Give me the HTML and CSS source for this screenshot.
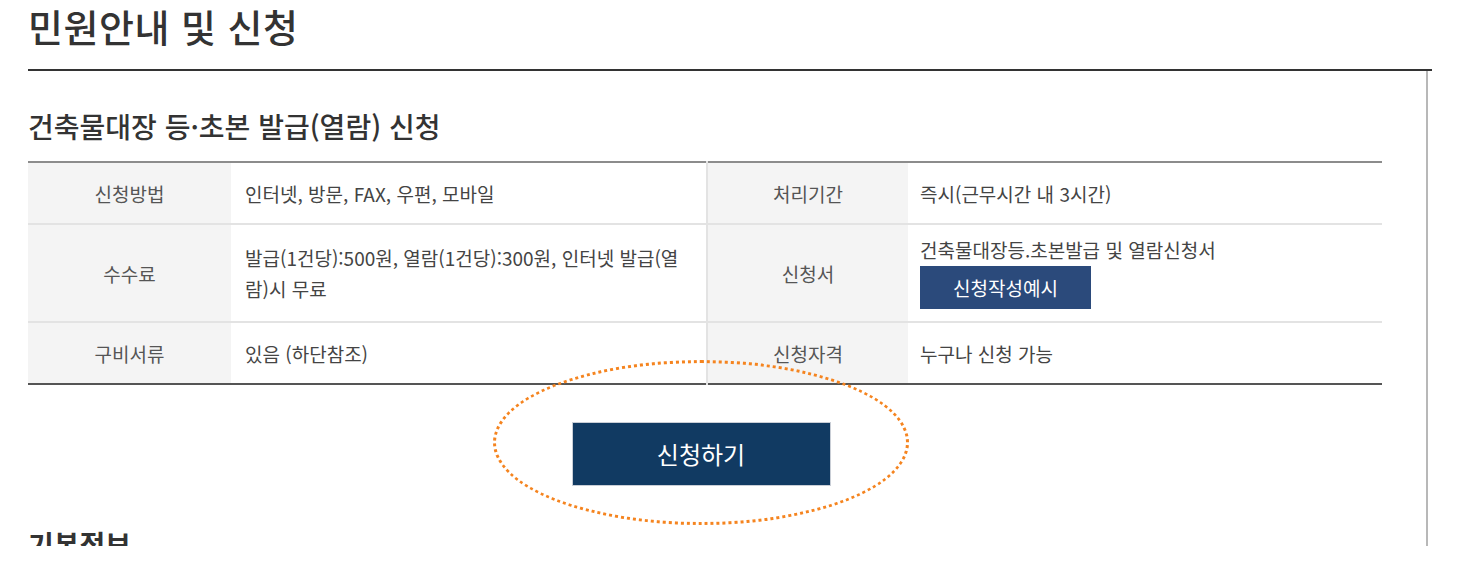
FILE: index.html
```html
<!DOCTYPE html>
<html lang="ko">
<head>
    <meta charset="UTF-8">
    <meta name="viewport" content="width=device-width, initial-scale=1.0">
    <title>민원안내 및 신청</title>
    <link rel="stylesheet" href="styles.css">
</head>
<body>
    <div class="page">
        <h1 class="page-title">민원안내 및 신청</h1>
        <div class="frame">
            <h2 class="sub-title">건축물대장 등·초본 발급(열람) 신청</h2>
            <table class="info">
                <colgroup>
                    <col class="col-th">
                    <col class="col-td">
                    <col class="col-th2">
                    <col>
                </colgroup>
                <tbody>
                    <tr class="row-short">
                        <th>신청방법</th>
                        <td class="split">인터넷, 방문, FAX, 우편, 모바일</td>
                        <th>처리기간</th>
                        <td>즉시(근무시간 내 3시간)</td>
                    </tr>
                    <tr>
                        <th>수수료</th>
                        <td class="split">발급(1건당):500원, 열람(1건당):300원, 인터넷 발급(열람)시 무료</td>
                        <th>신청서</th>
                        <td>
                            건축물대장등.초본발급 및 열람신청서
                            <div><a class="btn-sample" href="#">신청작성예시</a></div>
                        </td>
                    </tr>
                    <tr class="row-short">
                        <th>구비서류</th>
                        <td class="split">있음 (하단참조)</td>
                        <th>신청자격</th>
                        <td>누구나 신청 가능</td>
                    </tr>
                </tbody>
            </table>
            <div class="apply">
                <span class="highlight"></span>
                <a class="btn-apply" href="#">신청하기</a>
            </div>
            <h2 class="section-title">기본정보</h2>
        </div>
    </div>
</body>
</html>
```

FILE: styles.css
```css
*{
    margin: 0;
    padding: 0;
    box-sizing: border-box;
}
body{
    background-color: #fff;
    color: #444;
    font-family: "Noto Sans CJK KR", "Noto Sans", sans-serif;
}
.page{
    padding-left: 28px;
    width: 1432px;
}
.page-title{
    font-size: 38px;
    font-weight: 500;
    line-height: 46px;
    letter-spacing: 0.5px;
    color: #333;
    padding: 3px 0 20px 0;
    border-bottom: 2px solid #333;
}
.frame{
    width: 1400px;
    height: 475px;
    overflow: hidden;
    border-right: 2px solid #b8b8b8;
    padding-right: 44px;
}
.sub-title{
    font-size: 28px;
    font-weight: 500;
    line-height: 36px;
    color: #333;
    margin: 37px 0 17px 0;
}
.info{
    width: 100%;
    table-layout: fixed;
    border-collapse: collapse;
    border-top: 2px solid #8c8c8c;
    border-bottom: 2px solid #555;
    font-size: 19px;
    line-height: 31px;
}
.col-th{ width: 203px; }
.col-td{ width: 476px; }
.col-th2{ width: 201px; }
.info tr + tr{
    border-top: 2px solid #e3e3e3;
}
.info th{
    font-weight: 400;
    color: #555;
    background-color: #f4f4f4;
    text-align: center;
    padding: 0;
    height: 98px;
}
.info .row-short th{
    height: 62px;
}
.info td{
    padding: 4px 12px;
    text-align: left;
    vertical-align: middle;
}
.info td.split{
    padding: 4px 14px;
    border-right: 2px solid #e3e3e3;
}
.btn-sample{
    display: inline-block;
    height: 43px;
    line-height: 43px;
    padding: 0 33px;
    margin: 1px 0 3px;
    background-color: #2b4a7b;
    color: #fff;
    text-decoration: none;
}
.apply{
    position: relative;
    width: 259px;
    margin: 37px auto 0;
    left: -4px;
}
.btn-apply{
    display: block;
    height: 64px;
    line-height: 62px;
    text-align: center;
    font-size: 24px;
    color: #fff;
    background-color: #113a62;
    border: 1px solid #c9ced6;
    text-decoration: none;
}
.highlight{
    position: absolute;
    left: -79px;
    top: -62px;
    width: 416px;
    height: 165px;
    border: 3px dotted #f5841f;
    border-radius: 50%;
}
.section-title{
    font-size: 28px;
    font-weight: 700;
    color: #333;
    line-height: 36px;
    margin: 40px 0 0 0;
}
```
